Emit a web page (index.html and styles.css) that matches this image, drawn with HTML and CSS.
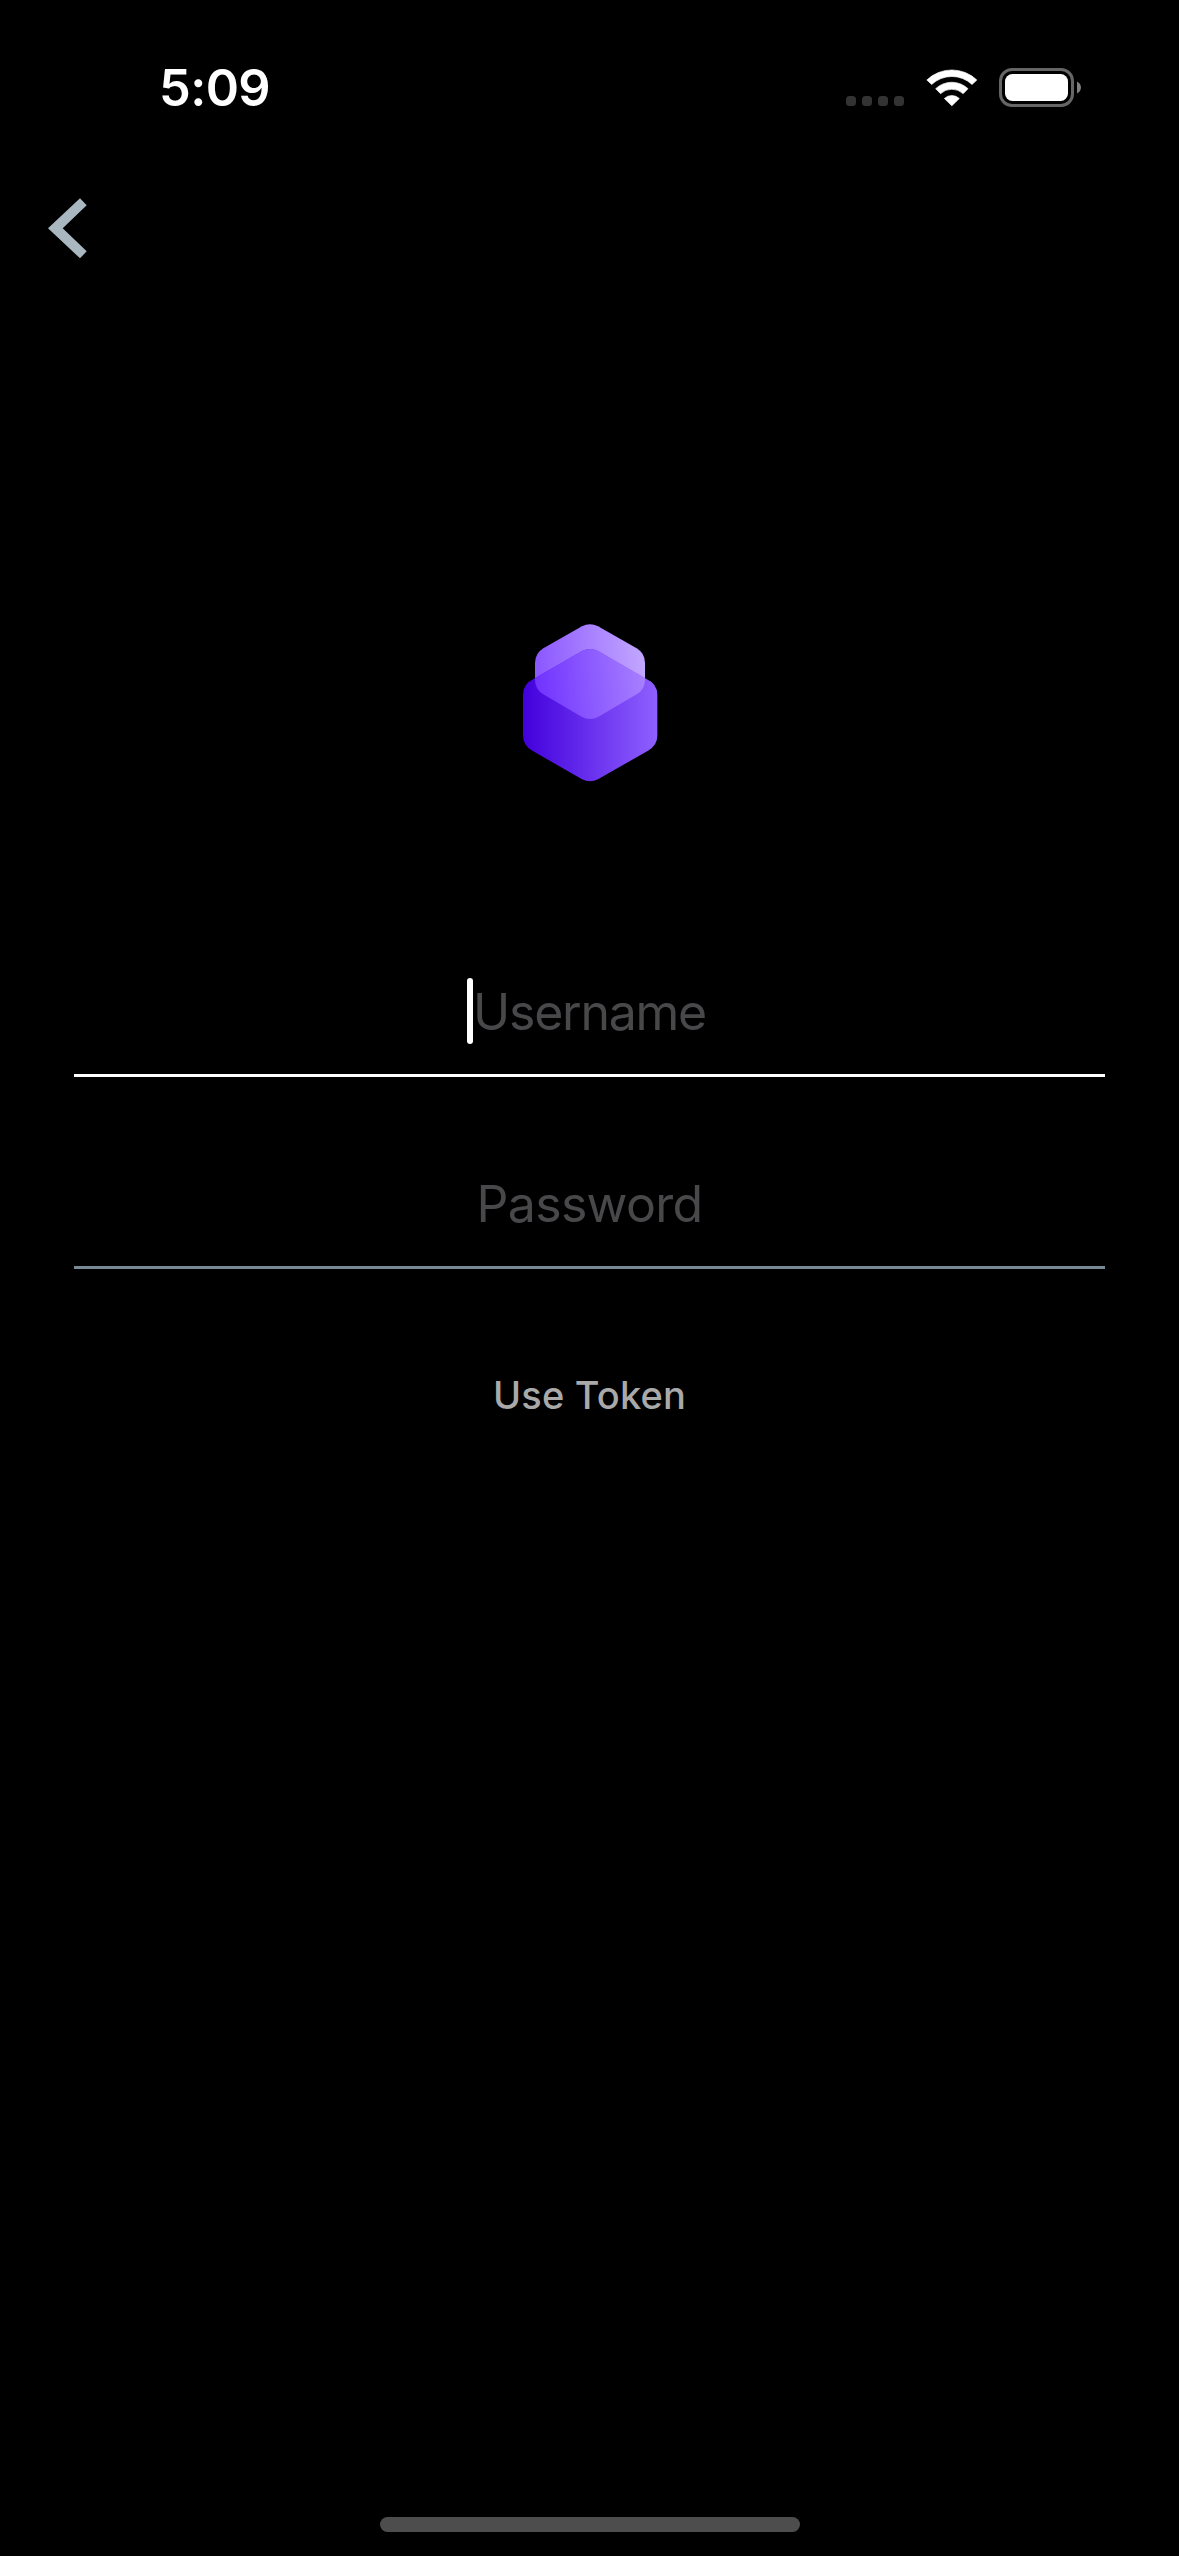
FILE: index.html
```html
<!DOCTYPE html>
<html lang="en">
<head>
<meta charset="utf-8">
<title>Sign in</title>
<link rel="stylesheet" href="styles.css">
</head>
<body>
<div class="screen">
  <header class="status">
    <span class="time">5:09</span>
    <div class="indicators">
      <div class="signal"><i></i><i></i><i></i><i></i></div>
      <svg class="wifi" viewBox="287 54 156 117" aria-hidden="true">
        <g fill="#fff" stroke="#fff" stroke-width="2" stroke-linejoin="round">
          <path d="M289.500 90A108.500 108.500 0 0 1 439.500 90L425 103.500A88 88 0 0 0 304 103.500Z"/>
          <path d="M316 116A70.500 70.500 0 0 1 413 116L398.500 131A50 50 0 0 0 330.500 131Z"/>
          <path d="M342 145.500A32.500 32.500 0 0 1 387 145.500L364.500 167.500Z"/>
        </g>
      </svg>
      <svg class="battery" viewBox="0 0 82 39" aria-hidden="true">
        <rect x="1.500" y="1.500" width="72" height="36" rx="11.500" fill="none" stroke="#666" stroke-width="3"/>
        <rect x="6" y="6" width="63" height="27" rx="7.500" fill="#fff"/>
        <path d="M78 13.500C83.300 16 83.300 23 78 25.500Z" fill="#808080"/>
      </svg>
    </div>
  </header>
  <nav class="nav">
    <svg class="back" viewBox="0 0 40 61" role="img" aria-label="Back">
      <path d="M32 0.300L38.700 7.300L14.700 30.300L38.700 53.300L32 60.300L0 30.300Z" fill="#a9b7c0"/>
    </svg>
  </nav>
  <main class="login">
    <svg class="logo" viewBox="0 0 480 555" aria-hidden="true">
      <defs>
        <linearGradient id="base" x1="39" x2="442" y1="0" y2="0" gradientUnits="userSpaceOnUse">
          <stop offset="0" stop-color="#4200dc"/><stop offset="1" stop-color="#8f60ff"/>
        </linearGradient>
        <linearGradient id="top" x1="75" x2="405" y1="90" y2="60" gradientUnits="userSpaceOnUse">
          <stop offset="0" stop-color="#8c58ff"/><stop offset="1" stop-color="#c4a9ff"/>
        </linearGradient>
        <linearGradient id="overlap" x1="75" x2="405" y1="240" y2="210" gradientUnits="userSpaceOnUse">
          <stop offset="0" stop-color="#7032ff"/><stop offset="1" stop-color="#a780ff"/>
        </linearGradient>
        <clipPath id="cap">
          <path d="M216 49Q240 37 264 49L380 115Q405 130 405 159V210Q405 238 380 253L264 321Q240 333 216 321L100 253Q75 238 75 210V159Q75 130 100 115Z"/>
        </clipPath>
      </defs>
      <path fill="url(#top)" d="M216 49Q240 37 264 49L380 115Q405 130 405 159V210Q405 238 380 253L264 321Q240 333 216 321L100 253Q75 238 75 210V159Q75 130 100 115Z"/>
      <path fill="url(#base)" d="M216 123Q240 111 264 123L408 206Q442 221 442 254V378Q442 406 414 422L264 508Q240 520 216 508L67 422Q39 406 39 378V254Q39 221 72 206Z"/>
      <path clip-path="url(#cap)" fill="url(#overlap)" d="M216 123Q240 111 264 123L408 206Q442 221 442 254V378Q442 406 414 422L264 508Q240 520 216 508L67 422Q39 406 39 378V254Q39 221 72 206Z"/>
    </svg>
    <div class="field field-active">
      <span class="placeholder username"><i class="caret"></i>Username</span>
    </div>
    <div class="field">
      <span class="placeholder password">Password</span>
    </div>
    <a class="token">Use Token</a>
  </main>
  <div class="home"></div>
</div>
</body>
</html>
```
FILE: styles.css
```css
* { box-sizing: border-box; }
body {
  margin: 0;
  background: #000;
  font-family: Inter, "Liberation Sans", sans-serif;
}
.screen {
  width: 1179px;
  height: 2556px;
  display: flex;
  flex-direction: column;
  background: #000;
  overflow: hidden;
}
.status {
  height: 177px;
  padding: 58px 98px 0 159px;
  display: flex;
  justify-content: space-between;
  align-items: flex-start;
}
.time {
  color: #fff;
  font-size: 50.5px;
  font-weight: 600;
  line-height: 60px;
  letter-spacing: -0.6px;
}
.indicators {
  display: flex;
  padding-top: 10px;
}
.signal {
  display: flex;
  gap: 6px;
  padding-top: 28px;
  margin-right: 22px;
}
.signal i {
  width: 10px;
  height: 10px;
  border-radius: 3.5px;
  background: #333;
}
.wifi {
  width: 52px;
  height: 39px;
  margin-right: 21px;
}
.battery {
  width: 82px;
  height: 39px;
}
.nav {
  height: 100px;
  padding: 21px 0 0 48px;
}
.back {
  display: block;
  width: 40px;
  height: 61px;
}
.login {
  flex: 1;
  padding: 333px 74px 0;
  display: flex;
  flex-direction: column;
  align-items: center;
}
.logo {
  width: 160px;
  height: 185px;
  margin-bottom: 148px;
}
.field {
  width: 1031px;
  height: 134px;
  margin-bottom: 58px;
  border-bottom: 3px solid #768994;
  display: flex;
  justify-content: center;
}
.field-active { border-color: #fff; }
.placeholder {
  position: relative;
  padding-top: 39px;
  color: #48484a;
  font-size: 50px;
  line-height: 60px;
}
.username { letter-spacing: -1.25px; }
.password { letter-spacing: -0.7px; }
.caret {
  position: absolute;
  left: -6px;
  top: 35px;
  width: 6px;
  height: 66px;
  border-radius: 3px;
  background: #fff;
}
.token {
  margin-top: 44px;
  color: #a9a9a9;
  font-size: 38px;
  font-weight: 500;
  line-height: 48px;
  letter-spacing: 0.2px;
}
.home {
  width: 420px;
  height: 15px;
  margin: 0 auto 24px;
  border-radius: 7.5px;
  background: #4d4d4d;
}
```
